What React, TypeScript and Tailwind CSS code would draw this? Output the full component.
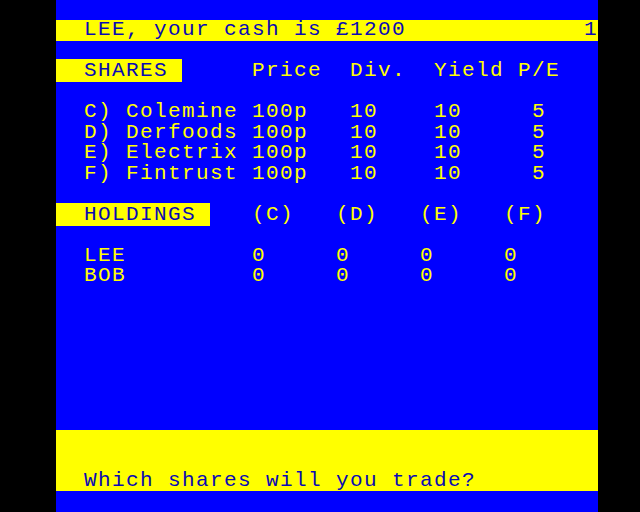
import React from "react";

const font = {
  fontFamily: '"Liberation Mono", "DejaVu Sans Mono", monospace',
};

type Seg = { t: string; band?: boolean };

function Row({ segs, full }: { segs: Seg[]; full?: boolean }) {
  return (
    <div
      className={`whitespace-pre text-[21px] leading-[20.48px] h-[20.48px] tracking-[1.4px] ${
        full ? "bg-[#ffff00] text-[#0a0ab4]" : "text-[#ffff00]"
      }`}
    >
      {segs.map((s, i) =>
        s.band ? (
          <span key={i} className="bg-[#ffff00] text-[#0a0ab4]">
            {s.t}
          </span>
        ) : (
          <span key={i}>{s.t}</span>
        )
      )}
    </div>
  );
}

export default function App() {
  const rows: { segs: Seg[]; full?: boolean }[] = [
    { segs: [{ t: "" }] },
    { segs: [{ t: "" }] },
    { segs: [{ t: "" }] },
    {
      segs: [
        { t: "  SHARES ", band: true },
        { t: "     Price  Div.  Yield P/E" },
      ],
    },
    { segs: [{ t: "" }] },
    { segs: [{ t: "  C) Colemine 100p   10    10     5" }] },
    { segs: [{ t: "  D) Derfoods 100p   10    10     5" }] },
    { segs: [{ t: "  E) Electrix 100p   10    10     5" }] },
    { segs: [{ t: "  F) Fintrust 100p   10    10     5" }] },
    { segs: [{ t: "" }] },
    {
      segs: [
        { t: "  HOLDINGS ", band: true },
        { t: "   (C)   (D)   (E)   (F)" },
      ],
    },
    { segs: [{ t: "" }] },
    { segs: [{ t: "  LEE         0     0     0     0" }] },
    { segs: [{ t: "  BOB         0     0     0     0" }] },
    { segs: [{ t: "" }] },
    { segs: [{ t: "" }] },
    { segs: [{ t: "" }] },
    { segs: [{ t: "" }] },
    { segs: [{ t: "" }] },
    { segs: [{ t: "" }] },
    { segs: [{ t: "" }] },
    { segs: [{ t: " " }], full: true },
    { segs: [{ t: " " }], full: true },
    { segs: [{ t: "  Which shares will you trade?" }], full: true },
    { segs: [{ t: "" }] },
  ];

  return (
    <div className="w-[640px] h-[512px] bg-black flex overflow-hidden" style={font}>
      <div className="ml-[56px] w-[542px] h-[512px] bg-[#0000ff] flex flex-col overflow-hidden">
        {rows.map((r, i) =>
          i === 1 ? (
            <div
              key={i}
              className="flex justify-between whitespace-pre text-[21px] leading-[20.48px] h-[20.48px] tracking-[1.4px] bg-[#ffff00] text-[#0a0ab4]"
            >
              <span>{"  LEE, your cash is £1200"}</span>
              <span>1</span>
            </div>
          ) : (
            <Row key={i} segs={r.segs} full={r.full} />
          )
        )}
      </div>
    </div>
  );
}
